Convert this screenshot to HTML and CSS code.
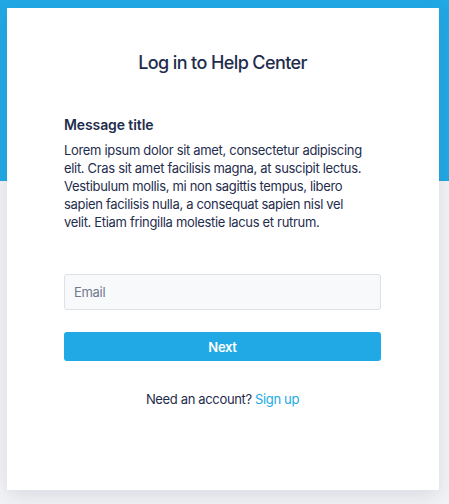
FILE: index.html
```html
<!DOCTYPE html>
<html lang="en">
<head>
<meta charset="utf-8">
<title>Log in to Help Center</title>
<link rel="stylesheet" href="styles.css">
</head>
<body>
<div class="page">
  <main class="card">
    <h1 class="title">Log in to Help Center</h1>
    <section class="message">
      <h2 class="message-title">Message title</h2>
      <p class="message-body">Lorem ipsum dolor sit amet, consectetur adipiscing elit. Cras sit amet facilisis magna, at suscipit lectus. Vestibulum mollis, mi non sagittis tempus, libero sapien facilisis nulla, a consequat sapien nisl vel velit. Etiam fringilla molestie lacus et rutrum.</p>
    </section>
    <form class="form">
      <input class="input" type="email" placeholder="Email">
      <button class="btn" type="button">Next</button>
    </form>
    <p class="signup">Need an account? <a href="#" class="link">Sign up</a></p>
  </main>
</div>
</body>
</html>
```

FILE: styles.css
```css
* { box-sizing: border-box; }
html, body { margin: 0; padding: 0; }
body {
  font-family: Inter, "Noto Sans", sans-serif;
  color: #1f2d4d;
  background: linear-gradient(#21a9e5 0, #21a9e5 181px, #f3f4f6 181px);
  min-height: 504px;
}
.page {
  padding: 8px 10px 0 7px;
}
.card {
  width: 432px;
  height: 482px;
  background: #fff;
  box-shadow: 0 6px 20px rgba(30, 45, 80, 0.12);
  padding: 43px 58px 0 57px;
  display: flex;
  flex-direction: column;
}
.title {
  margin: 0;
  font-size: 18px;
  line-height: 24px;
  font-weight: 500;
  text-align: center;
  letter-spacing: -0.6px;
}
.message {
  margin-top: 40px;
}
.message-title {
  margin: 0;
  font-size: 14px;
  line-height: 20px;
  font-weight: 600;
  letter-spacing: -0.1px;
}
.message-body {
  margin: 6px 0 0;
  max-width: 304px;
  font-size: 13px;
  line-height: 18px;
  letter-spacing: -0.32px;
}
.form {
  margin-top: 43px;
  display: flex;
  flex-direction: column;
  gap: 22px;
}
.input {
  height: 36px;
  border: 1px solid #dfe1e8;
  border-radius: 3px;
  background: #f8f9fb;
  padding: 0 9px;
  font-family: inherit;
  font-size: 13px;
  letter-spacing: -0.3px;
  color: #1f2d4d;
  outline: none;
}
.input::placeholder { color: #6f7a90; }
.btn {
  height: 29px;
  border: 0;
  border-radius: 3px;
  background: #21a9e5;
  color: #fff;
  font-family: inherit;
  font-size: 13px;
  font-weight: 600;
  letter-spacing: -0.3px;
}
.signup {
  margin: 29px 0 0;
  text-align: center;
  font-size: 13px;
  line-height: 18px;
  letter-spacing: -0.35px;
}
.link {
  color: #21a9e5;
  text-decoration: none;
}
```
